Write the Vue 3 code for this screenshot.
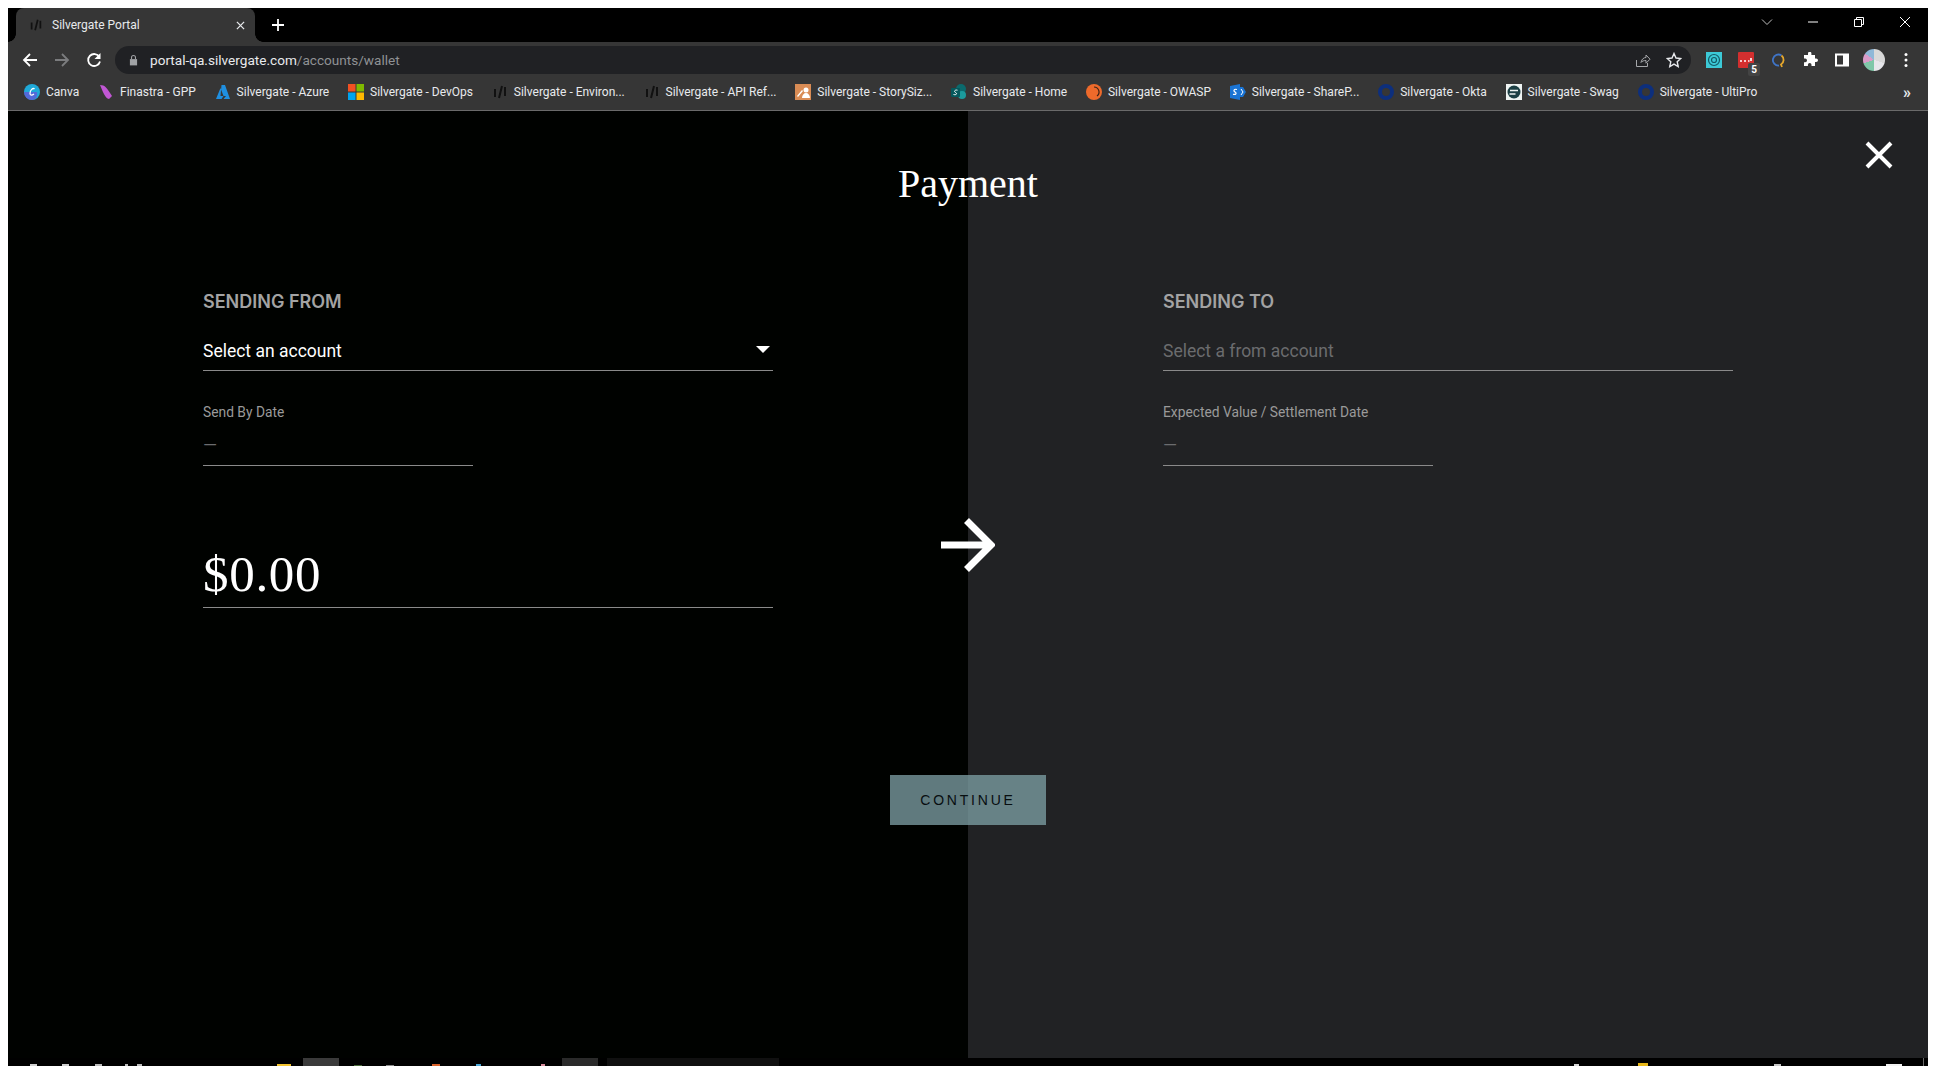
<script setup>
const bookmarks = [
  { name: 'Canva', icon: 'canva' },
  { name: 'Finastra - GPP', icon: 'finastra' },
  { name: 'Silvergate - Azure', icon: 'azure' },
  { name: 'Silvergate - DevOps', icon: 'ms' },
  { name: 'Silvergate - Environ...', icon: 'sg' },
  { name: 'Silvergate - API Ref...', icon: 'sg' },
  { name: 'Silvergate - StorySiz...', icon: 'story' },
  { name: 'Silvergate - Home', icon: 'sp' },
  { name: 'Silvergate - OWASP', icon: 'owasp' },
  { name: 'Silvergate - ShareP...', icon: 'share' },
  { name: 'Silvergate - Okta', icon: 'okta' },
  { name: 'Silvergate - Swag', icon: 'swag' },
  { name: 'Silvergate - UltiPro', icon: 'okta' }
]

// bits of the windows taskbar icons that stick out at the bottom of the shot
const taskbarBits = [
  { x: 22, w: 7, h: 2, c: '#cfcfcf' },
  { x: 54, w: 7, h: 2, c: '#cfcfcf' },
  { x: 87, w: 7, h: 2, c: '#bdbdbd' },
  { x: 117, w: 3, h: 2, c: '#bdbdbd' },
  { x: 129, w: 5, h: 2, c: '#bdbdbd' },
  { x: 269, w: 14, h: 2, c: '#f4c430' },
  { x: 295, w: 36, h: 8, c: '#3a3a3a' },
  { x: 346, w: 8, h: 1, c: '#4a6a3a' },
  { x: 378, w: 8, h: 1, c: '#8a8a8a' },
  { x: 424, w: 8, h: 2, c: '#d9622b' },
  { x: 468, w: 5, h: 2, c: '#4aa8d8' },
  { x: 533, w: 4, h: 2, c: '#d88a9a' },
  { x: 554, w: 36, h: 8, c: '#2a2a2a' },
  { x: 599, w: 172, h: 8, c: '#101010' },
  { x: 1566, w: 5, h: 2, c: '#d8d8d8' },
  { x: 1630, w: 10, h: 3, c: '#e8b818' },
  { x: 1766, w: 7, h: 2, c: '#c8c8c8' },
  { x: 1878, w: 16, h: 2, c: '#f2f2f2' },
  { x: 1915, w: 1, h: 8, c: '#6a6a6a' }
]
</script>

<template>
  <div class="screen">
    <!-- browser chrome -->
    <div class="tabstrip">
      <div class="tab">
        <svg class="fav" viewBox="0 0 16 16"><path d="M3 5v8M7 14l3-12M13 3v9" stroke="#111" stroke-width="2" fill="none"/></svg>
        <span class="tab-title">Silvergate Portal</span>
        <svg class="tab-x" viewBox="0 0 10 10"><path d="M1 1l8 8M9 1l-8 8" stroke="#e8eaed" stroke-width="1.4"/></svg>
      </div>
      <svg class="plus" viewBox="0 0 12 12"><path d="M6 0v12M0 6h12" stroke="#fff" stroke-width="1.8"/></svg>
      <div class="win-btns">
        <svg viewBox="0 0 12 12" class="win-chev"><path d="M1 3.500l5 5 5-5" stroke="#bdbdbd" fill="none"/></svg>
        <svg viewBox="0 0 12 12"><path d="M1 6h10" stroke="#fff"/></svg>
        <svg viewBox="0 0 12 12"><path d="M1.500 3.500h7v7h-7zM3.500 3.500v-2h7v7h-2" stroke="#fff" fill="none"/></svg>
        <svg viewBox="0 0 12 12"><path d="M1 1l10 10M11 1L1 11" stroke="#fff"/></svg>
      </div>
    </div>

    <div class="toolbar">
      <svg class="nav" viewBox="0 0 16 16"><path d="M15 8H2M8 2L2 8l6 6" stroke="#fff" stroke-width="1.800" fill="none"/></svg>
      <svg class="nav" viewBox="0 0 16 16"><path d="M1 8h13M8 2l6 6-6 6" stroke="#7b7c7e" stroke-width="1.800" fill="none"/></svg>
      <svg class="nav" viewBox="0 0 16 16"><path d="M13.400 5A6 6 0 1 0 14 9.500" stroke="#fff" stroke-width="1.800" fill="none"/><path d="M14.500 1v6h-6z" fill="#fff"/></svg>
      <div class="omnibox">
        <svg class="lock" viewBox="0 0 10 12"><path d="M1 5h8v7H1z" fill="#a0a2a5"/><path d="M2.800 5V3.200a2.200 2.200 0 0 1 4.400 0V5" stroke="#a0a2a5" fill="none" stroke-width="1.200"/></svg>
        <span class="url">portal-qa.silvergate.com<span class="url-path">/accounts/wallet</span></span>
        <svg class="omni-icon" viewBox="0 0 16 16"><path d="M1.500 8v6.500h11V11M6 10.500C6.500 7 9 5.500 11 5.500V3l4 4.200-4 4V8.500c-2 0-4 .5-5 2z" stroke="#a5a7aa" fill="none"/></svg>
        <svg class="omni-icon star-ic" viewBox="0 0 16 16"><path d="M8 1.500l2 4.500 4.800.5-3.600 3.200 1 4.800L8 12.100l-4.200 2.400 1-4.800L1.200 6.500 6 6z" stroke="#e8eaed" stroke-width="1.400" fill="none"/></svg>
      </div>
      <div class="ext-row">
        <svg class="ext" viewBox="0 0 16 16"><rect width="16" height="16" fill="#3cc9d6"/><circle cx="8" cy="8" r="5.500" fill="none" stroke="#135a66" stroke-width="1.200"/><circle cx="8" cy="8" r="2.500" fill="none" stroke="#135a66" stroke-width="1.200"/></svg>
        <div class="ext-red">
          <svg class="ext" viewBox="0 0 16 16"><rect width="16" height="16" rx="1" fill="#d32f2f"/><path d="M2 9h2M6 9h2M10 9h1.500M13 6v3" stroke="#fff" stroke-width="1.600"/></svg>
          <span class="ext-badge">5</span>
        </div>
        <svg class="ext" viewBox="0 0 16 16"><path d="M11.500 3.500A5.500 5.500 0 1 0 9 13.500" stroke="#3f74c6" stroke-width="1.800" fill="none"/><path d="M11.500 3.500A5.500 5.500 0 0 1 11 12.500L12 15" stroke="#e5a72c" stroke-width="1.800" fill="none"/></svg>
        <svg class="ext" viewBox="0 0 16 16"><path d="M6 1.500a1.700 1.700 0 0 1 3.400 0V3H13v3.500h1.200a1.800 1.800 0 0 1 0 3.600H13V14H9.500v-1.300a1.800 1.800 0 0 0-3.600 0V14H2v-3.800h1.200a1.800 1.800 0 0 0 0-3.600H2V3h4z" fill="#fff"/></svg>
        <svg class="ext" viewBox="0 0 16 16"><path d="M1 1.500h14v13H1zM3 3.500v9h6v-9z" fill="#fff" fill-rule="evenodd"/></svg>
        <div class="avatar"></div>
        <svg class="ext dots" viewBox="0 0 4 16"><circle cx="2" cy="2.500" r="1.500" fill="#fff"/><circle cx="2" cy="8" r="1.500" fill="#fff"/><circle cx="2" cy="13.500" r="1.500" fill="#fff"/></svg>
      </div>
    </div>

    <div class="bookmarks">
      <div v-for="b in bookmarks" :key="b.name + b.icon" class="bm">
        <svg class="bm-icon" viewBox="0 0 16 16">
          <template v-if="b.icon === 'canva'">
            <circle cx="8" cy="8" r="8" fill="#1fa9d8"/><path d="M0 8a8 8 0 0 0 8 8c3 0 6-3 5-8z" fill="#6a4fd8" opacity=".7"/>
            <path d="M10.500 5C9 3.500 6 6 6 9.500c0 2 2 2 4 .5" stroke="#fff" stroke-width="1.300" fill="none"/>
          </template>
          <path v-else-if="b.icon === 'finastra'" d="M2 1c5 0 7 3 12 11l-3 3C7 14 5 8 2 1z" fill="#c157d4"/>
          <path v-else-if="b.icon === 'azure'" d="M6.500 1H10l5 14H8.500L11 12H5.500zM5.500 4L1 15h5.500l2-3z" fill="#1f8fe0"/>
          <template v-else-if="b.icon === 'ms'">
            <rect x="0" y="0" width="7.500" height="7.500" fill="#f25022"/><rect x="8.500" y="0" width="7.500" height="7.500" fill="#7fba00"/>
            <rect x="0" y="8.500" width="7.500" height="7.500" fill="#00a4ef"/><rect x="8.500" y="8.500" width="7.500" height="7.500" fill="#ffb900"/>
          </template>
          <path v-else-if="b.icon === 'sg'" d="M3 5v8M7 14l3-12M13 3v9" stroke="#111" stroke-width="2" fill="none"/>
          <template v-else-if="b.icon === 'story'">
            <rect width="16" height="16" fill="#d98c55"/><circle cx="11" cy="6" r="2.500" fill="#fff"/><path d="M7 14c0-3 2-5 4-5s4 2 4 5zM2 12l5-6 1 1-5 6z" fill="#fff"/>
          </template>
          <template v-else-if="b.icon === 'sp'">
            <circle cx="10" cy="5" r="5" fill="#0b6a6d"/><circle cx="11" cy="11" r="4" fill="#1b9a9c"/><rect x="0" y="4" width="9" height="9" rx="1" fill="#05585c"/>
            <path d="M6.500 6.200C4 5.500 2.500 7.500 4.500 8.500s1 2.800-2 2" stroke="#fff" fill="none" stroke-width="1"/>
          </template>
          <template v-else-if="b.icon === 'owasp'">
            <circle cx="8" cy="8" r="8" fill="#ee6a2b"/><path d="M8 3a5 5 0 0 1 3 9" stroke="#3a2318" stroke-width="1.200" fill="none"/>
          </template>
          <template v-else-if="b.icon === 'share'">
            <path d="M0 2l10-2v16L0 14z" fill="#1a74d4"/><path d="M10 3h3l3 5-3 5h-3z" fill="#1a74d4"/><path d="M7 5.500C4 4.500 3 7 5 8s1 3-2 2.300" stroke="#fff" fill="none" stroke-width="1.200"/><path d="M11 5l2 3-2 3" stroke="#fff" fill="none"/>
          </template>
          <circle v-else-if="b.icon === 'okta'" cx="8" cy="8" r="6" fill="none" stroke="#0d2f7d" stroke-width="4"/>
          <template v-else-if="b.icon === 'swag'">
            <rect width="16" height="16" fill="#eef3f2"/><circle cx="8" cy="8" r="6.500" fill="#1c3f44"/><path d="M4 6.500h8M3.500 10h6" stroke="#eef3f2" stroke-width="1.400"/>
          </template>
        </svg>
        <span>{{ b.name }}</span>
      </div>
      <span class="bm-more">»</span>
    </div>

    <!-- page -->
    <div class="page">
      <div class="title">Payment</div>

      <svg class="close" viewBox="0 0 28 28"><path d="M2 2l24 24M26 2L2 26" stroke="#fff" stroke-width="4"/></svg>
      <svg class="arrow" viewBox="0 0 54 54"><path d="M0 27h50M25.500 2.500L50 27 25.500 51.500" stroke="#fff" stroke-width="7" fill="none"/></svg>

      <section class="side">
        <h2 class="head">SENDING FROM</h2>
        <div class="select">
          <span>Select an account</span>
          <i class="caret"></i>
        </div>
        <label class="small">Send By Date</label>
        <div class="date"><span>—</span></div>
        <div class="amount">$0.00</div>
      </section>

      <section class="side">
        <h2 class="head">SENDING TO</h2>
        <div class="select placeholder">
          <span>Select a from account</span>
        </div>
        <label class="small">Expected Value / Settlement Date</label>
        <div class="date"><span>—</span></div>
      </section>

      <button class="continue">CONTINUE</button>
    </div>

    <div class="taskbar">
      <i
        v-for="b in taskbarBits"
        :key="b.x"
        class="bit"
        :style="{ left: b.x + 'px', width: b.w + 'px', height: b.h + 'px', background: b.c }"
      ></i>
    </div>
  </div>
</template>

<style>
html, body {
  margin: 0;
  background: #fff;
}
</style>

<style scoped>
.screen {
  width: 1936px;
  height: 1066px;
  box-sizing: border-box;
  padding: 8px 8px 0;
  background: #fff;
  display: flex;
  flex-direction: column;
  overflow: hidden;
  font-family: Roboto, sans-serif;
}

.tabstrip {
  height: 34px;
  background: #000;
  display: flex;
  align-items: center;
  flex-shrink: 0;
}
.tab {
  position: relative;
  width: 239px;
  height: 34px;
  margin-left: 8px;
  box-sizing: border-box;
  background: #363636;
  border-radius: 8px 8px 0 0;
  display: flex;
  align-items: center;
  padding: 0 10px 0 13px;
  color: #e8eaed;
  font-size: 12px;
}
.tab::before,
.tab::after {
  content: "";
  position: absolute;
  bottom: 0;
  width: 8px;
  height: 8px;
}
.tab::before {
  left: -8px;
  background: radial-gradient(circle at 0 0, #000 7.500px, #363636 8px);
}
.tab::after {
  right: -8px;
  background: radial-gradient(circle at 100% 0, #000 7.500px, #363636 8px);
}
.fav {
  width: 14px;
  height: 14px;
}
.tab-title {
  margin-left: 9px;
  flex: 1;
}
.tab-x {
  width: 9px;
  height: 9px;
}
.plus {
  width: 12px;
  height: 12px;
  margin-left: 17px;
}
.win-btns {
  margin-left: auto;
  display: flex;
  gap: 34px;
  padding-right: 17px;
  padding-bottom: 6px;
}
.win-btns svg {
  width: 12px;
  height: 12px;
}

.toolbar {
  height: 36px;
  background: #363636;
  display: flex;
  align-items: center;
  flex-shrink: 0;
  padding-left: 14px;
  gap: 16px;
}
.nav {
  width: 16px;
  height: 16px;
}
.omnibox {
  width: 1576px;
  height: 28px;
  margin-left: -3px;
  border-radius: 14px;
  background: #202124;
  display: flex;
  align-items: center;
  padding: 0 9px 0 14px;
  box-sizing: border-box;
}
.lock {
  width: 9px;
  height: 12px;
}
.url {
  margin-left: 12px;
  flex: 1;
  font-size: 13.600px;
  color: #e8eaed;
}
.url-path {
  color: #8f9194;
}
.omni-icon {
  width: 16px;
  height: 16px;
}
.star-ic {
  margin-left: 15px;
}
.ext-row {
  display: flex;
  align-items: center;
  gap: 16px;
  margin-left: -1px;
}
.ext {
  width: 16px;
  height: 16px;
  display: block;
}
.ext-red {
  position: relative;
}
.ext-badge {
  position: absolute;
  right: -6px;
  bottom: -8px;
  width: 12px;
  height: 13px;
  background: #444;
  color: #fff;
  font-size: 10px;
  font-weight: 700;
  text-align: center;
  line-height: 13px;
  border-radius: 2px;
}
.avatar {
  width: 22px;
  height: 22px;
  margin-left: -3px;
  border-radius: 50%;
  background: conic-gradient(#d9d9d9 0 30%, #e6e6ea 30% 50%, #7fc7a8 50% 70%, #d99cc9 70% 85%, #8fb8d8 85% 100%);
}
.dots {
  width: 4px;
  margin-left: 3px;
}

.bookmarks {
  height: 32px;
  padding-bottom: 4px;
  box-sizing: border-box;
  height: 33px;
  flex-shrink: 0;
  background: #363636;
  border-bottom: 1px solid #6a6a6a;
  display: flex;
  align-items: center;
  gap: 18.800px;
  padding-left: 16px;
  color: #e8eaed;
  font-size: 12px;
}
.bm {
  display: flex;
  align-items: center;
  gap: 6px;
  white-space: nowrap;
}
.bm-icon {
  width: 16px;
  height: 16px;
  flex-shrink: 0;
}
.bm-more {
  margin-left: auto;
  margin-right: 17px;
  font-size: 16px;
  font-weight: 700;
}

.page {
  flex: 1;
  position: relative;
  display: grid;
  grid-template-columns: 960px 960px;
  background: linear-gradient(to right, #000200 50%, #212224 50%);
}
.title {
  position: absolute;
  top: 50px;
  left: 0;
  right: 0;
  text-align: center;
  font-family: "Liberation Serif", serif;
  font-size: 40px;
  line-height: 46px;
  color: #fff;
}
.close {
  position: absolute;
  top: 30px;
  right: 35px;
  width: 28px;
  height: 28px;
}
.arrow {
  position: absolute;
  top: 407px;
  left: 933px;
  width: 54px;
  height: 54px;
}
.side {
  padding: 180px 0 0 195px;
  width: 765px;
  box-sizing: border-box;
}
.head {
  margin: 0;
  font-family: Inter, sans-serif;
  font-size: 18px;
  line-height: 22px;
  font-weight: 600;
  color: #a3a3a3;
}
.select {
  width: 570px;
  height: 39px;
  margin-top: 19px;
  box-sizing: border-box;
  border-bottom: 1px solid #8a8a8a;
  display: flex;
  align-items: center;
  justify-content: space-between;
  font-size: 17.500px;
  color: #fff;
  padding-right: 3px;
}
.placeholder {
  color: #6b6c6e;
}
.caret {
  width: 0;
  height: 0;
  border-left: 7px solid transparent;
  border-right: 7px solid transparent;
  border-top: 7px solid #fff;
  margin-bottom: 4px;
}
.small {
  display: block;
  margin-top: 32px;
  font-size: 13.800px;
  line-height: 18px;
  color: #9a9a9a;
}
.date {
  width: 270px;
  height: 45px;
  box-sizing: border-box;
  border-bottom: 1px solid #8a8a8a;
  padding-top: 13px;
  color: #6b6c6e;
  font-size: 18px;
  line-height: 22px;
}
.amount {
  width: 570px;
  height: 85px;
  margin-top: 57px;
  box-sizing: border-box;
  border-bottom: 1px solid #8a8a8a;
  font-family: "Liberation Serif", serif;
  font-size: 51px;
  letter-spacing: 0.700px;
  line-height: 58px;
  padding-top: 22px;
  color: #fff;
}
.continue {
  position: absolute;
  left: 882px;
  top: 664px;
  width: 156px;
  height: 50px;
  border: none;
  background: rgba(126, 161, 165, 0.76);
  color: #080e10;
  font-family: "Liberation Sans", sans-serif;
  font-size: 14px;
  letter-spacing: 2.800px;
}

.taskbar {
  position: relative;
  height: 8px;
  flex-shrink: 0;
  background: #000;
}
.bit {
  position: absolute;
  bottom: 0;
}
</style>
